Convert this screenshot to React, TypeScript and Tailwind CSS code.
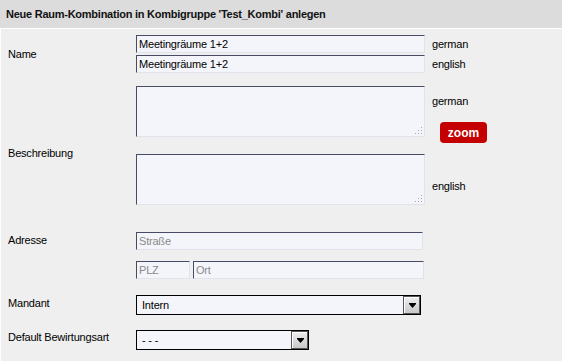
import React from 'react';

const font = { fontFamily: '"Liberation Sans", Arial, sans-serif' };

const inputCls =
    'h-[18px] bg-[#f4f5fa] border border-t-[#474b66] border-l-[#474b66] border-r-[#e1e3ea] border-b-[#e1e3ea] px-[2px] text-[11px] tracking-[-0.2px] text-black outline-none placeholder:text-[#8a8a8a]';

const Grip: React.FC = () => (
    <svg className="absolute right-[3px] bottom-[3px]" width="7" height="7" viewBox="0 0 7 7">
        <rect x="6" y="0" width="1" height="1" fill="#a8a8a8" />
        <rect x="3" y="3" width="1" height="1" fill="#a8a8a8" />
        <rect x="6" y="3" width="1" height="1" fill="#a8a8a8" />
        <rect x="0" y="6" width="1" height="1" fill="#a8a8a8" />
        <rect x="3" y="6" width="1" height="1" fill="#a8a8a8" />
        <rect x="6" y="6" width="1" height="1" fill="#a8a8a8" />
    </svg>
);

const TextBox: React.FC = () => (
    <div className="relative w-[289px] h-[51px]">
        <textarea className="w-full h-full resize-none bg-[#f4f5fa] border border-t-[#474b66] border-l-[#474b66] border-r-[#e1e3ea] border-b-[#e1e3ea] outline-none" />
        <Grip />
    </div>
);

const FakeSelect: React.FC<{ value: string; width: string }> = ({ value, width }) => (
    <div className={`${width} h-[20px] flex border border-black bg-[#f4f5fa]`}>
        <span className="flex-1 pl-[5px] text-[11px] tracking-[-0.2px] leading-[18px] text-black">{value}</span>
        <div className="w-[17px] h-[18px] border border-[#555] flex items-center justify-center">
            <div className="w-full h-full border-t border-l border-white bg-gradient-to-b from-[#ececec] to-[#c8c8c8] flex items-center justify-center">
                <svg width="7" height="5" viewBox="0 0 7 5">
                    <rect x="0" y="0" width="7" height="1" fill="#000" />
                    <polygon points="0,1 7,1 3.5,5" fill="#000" />
                </svg>
            </div>
        </div>
    </div>
);

export default function App() {
    return (
        <div className="w-[562px] h-[361px] flex flex-col bg-[#efefef] text-black" style={font}>
            <div className="h-[28px] bg-[#dcdcdc] flex items-center pl-[6px]">
                <h1 className="text-[11px] font-bold tracking-[-0.25px] text-[#111]">
                    Neue Raum-Kombination in Kombigruppe 'Test_Kombi' anlegen
                </h1>
            </div>

            <div className="flex-1 border-t border-l border-white pt-[6px] text-[11px] tracking-[-0.2px]">
                {/* Name */}
                <div className="flex items-center">
                    <div className="w-[135px] pl-[7px]">Name</div>
                    <div className="flex flex-col gap-[2px]">
                        <div className="flex items-center">
                            <input className={`${inputCls} w-[289px]`} defaultValue="Meetingräume 1+2" />
                            <span className="ml-[7px]">german</span>
                        </div>
                        <div className="flex items-center">
                            <input className={`${inputCls} w-[289px]`} defaultValue="Meetingräume 1+2" />
                            <span className="ml-[7px]">english</span>
                        </div>
                    </div>
                </div>

                {/* Beschreibung */}
                <div className="flex items-start mt-[13px]">
                    <div className="w-[135px] pl-[7px] pt-[61px] leading-[13px]">Beschreibung</div>
                    <div className="flex flex-col">
                        <div className="flex items-start">
                            <TextBox />
                            <div className="ml-[7px] flex flex-col items-start">
                                <span className="mt-[9px] leading-[13px]">german</span>
                                <button className="mt-[14px] ml-[8px] w-[47px] h-[21px] rounded-[4px] bg-[#c40000] text-white font-bold text-[12px] tracking-normal leading-none">
                                    zoom
                                </button>
                            </div>
                        </div>
                        <div className="flex items-start mt-[11px]">
                            <TextBox />
                            <span className="ml-[7px] mt-[26px] leading-[13px]">english</span>
                        </div>
                    </div>
                </div>

                {/* Adresse */}
                <div className="flex items-start mt-[27px]">
                    <div className="w-[135px] pl-[7px] pt-[2px] leading-[13px]">Adresse</div>
                    <div className="flex flex-col gap-[11px]">
                        <input className={`${inputCls} w-[287px] h-[17px]`} placeholder="Straße" />
                        <div className="flex gap-[3px]">
                            <input className={`${inputCls} w-[54px] h-[17px]`} placeholder="PLZ" />
                            <input className={`${inputCls} w-[231px] h-[17px]`} placeholder="Ort" />
                        </div>
                    </div>
                </div>

                {/* Mandant */}
                <div className="flex items-start mt-[16px]">
                    <div className="w-[135px] pl-[7px] pt-[2px] leading-[13px]">Mandant</div>
                    <FakeSelect value="Intern" width="w-[285px]" />
                </div>

                {/* Default Bewirtungsart */}
                <div className="flex items-start mt-[15px]">
                    <div className="w-[135px] pl-[7px] pt-[1px] leading-[13px]">Default Bewirtungsart</div>
                    <FakeSelect value="- - -" width="w-[173px]" />
                </div>
            </div>
        </div>
    );
}
